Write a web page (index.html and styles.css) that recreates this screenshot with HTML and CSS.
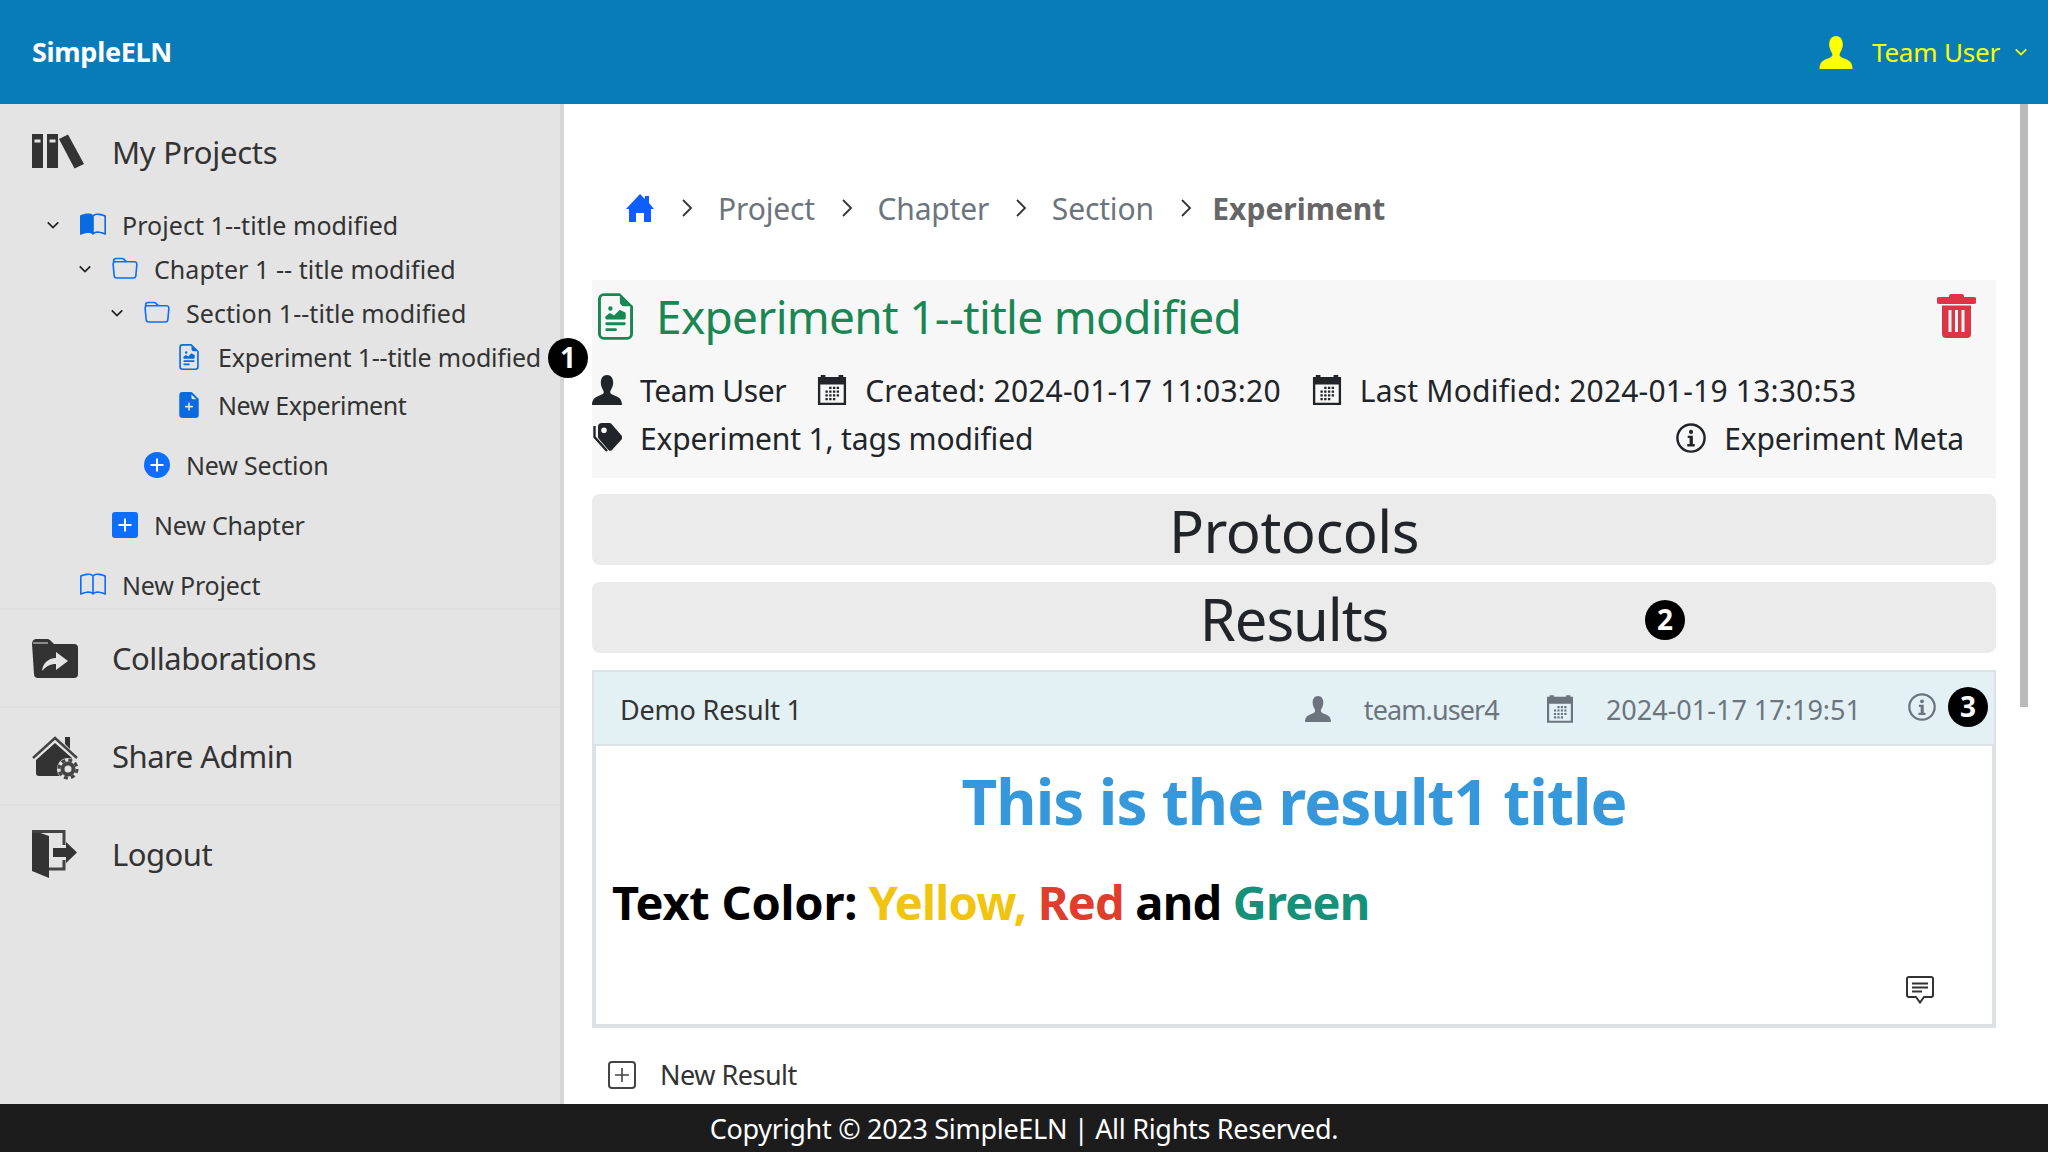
FILE: index.html

```html
<!DOCTYPE html>
<html lang="en">
<head>
  <meta charset="UTF-8" />
  <title>SimpleELN</title>
  <link rel="stylesheet" href="styles.css">
</head>
<body>
  <svg class="sprite" xmlns="http://www.w3.org/2000/svg">
    <symbol id="i-person" viewBox="0 0 16 16"><path d="M8 0c2.200 0 3.300 1.800 3.300 4.100S9.900 7.800 9.700 9.200c0 .8 1.100 1.200 2.900 2 1.500.6 3.400 1.500 3.400 4.800H0c0-3.300 1.900-4.200 3.400-4.800 1.800-.8 2.900-1.200 2.900-2C6.100 7.800 4.700 6.400 4.700 4.100S5.800 0 8 0z"/></symbol>
    <symbol id="i-calendar" viewBox="0 0 30 32"><path d="M0 2h3V0h5v2h14V0h5v2h3v30H0zM2.500 10v19.500h25V10z"/><path d="M12 12.500h2.500V15H12zM16 12.500h2.500V15H16zM20 12.500h2.500V15H20zM8 16.500h2.500V19H8zM12 16.500h2.500V19H12zM16 16.500h2.500V19H16zM20 16.500h2.500V19H20zM8 20.500h2.500V23H8zM12 20.500h2.500V23H12zM16 20.500h2.500V23H16zM20 20.500h2.500V23H20zM8 24.500h2.500V27H8zM12 24.500h2.500V27H12zM16 24.500h2.500V27H16z"/></symbol>
    <symbol id="i-info" viewBox="0 0 32 32"><circle cx="16" cy="16" r="14.500" fill="none" stroke="currentColor" stroke-width="2.600"/><circle cx="16" cy="9.500" r="2.200"/><path d="M12.500 13.500H18v9h2v2.500h-8v-2.500h2.500v-6.500h-2z"/></symbol>
    <symbol id="i-chevron" viewBox="0 0 16 16"><path d="M2 5l6 6 6-6" fill="none" stroke="currentColor" stroke-width="2"/></symbol>
    <symbol id="i-chevron-right" viewBox="0 0 12 20"><path d="M2 2l8 8-8 8" fill="none" stroke="currentColor" stroke-width="1.800"/></symbol>
    <symbol id="i-book" viewBox="0 0 16 16"><path d="M1 2.828c.885-.37 2.154-.769 3.388-.893 1.330-.134 2.458.063 3.112.752v9.746c-.935-.53-2.120-.603-3.213-.493-1.180.12-2.370.461-3.287.811V2.828zm7.500-.141c.654-.689 1.782-.886 3.112-.752 1.234.124 2.503.523 3.388.893v9.923c-.918-.35-2.107-.692-3.287-.81-1.094-.111-2.278-.039-3.213.492V2.687zM8 1.783C7.015.936 5.587.81 4.287.94c-1.514.153-3.042.672-3.994 1.105A.5.5 0 0 0 0 2.500v11a.5.5 0 0 0 .707.455c.882-.4 2.303-.881 3.680-1.020 1.409-.142 2.590.087 3.223.877a.5.5 0 0 0 .78 0c.633-.79 1.814-1.019 3.222-.877 1.378.139 2.800.62 3.681 1.020A.5.5 0 0 0 16 13.500v-11a.5.5 0 0 0-.293-.455c-.952-.433-2.480-.952-3.994-1.105C10.413.809 8.985.936 8 1.783z"/></symbol>
    <symbol id="i-book-half" viewBox="0 0 16 16"><path d="M8.500 2.687c.654-.689 1.782-.886 3.112-.752 1.234.124 2.503.523 3.388.893v9.923c-.918-.35-2.107-.692-3.287-.81-1.094-.111-2.278-.039-3.213.492V2.687zM8 1.783C7.015.936 5.587.81 4.287.94c-1.514.153-3.042.672-3.994 1.105A.5.5 0 0 0 0 2.500v11a.5.5 0 0 0 .707.455c.882-.4 2.303-.881 3.680-1.020 1.409-.142 2.590.087 3.223.877a.5.5 0 0 0 .78 0c.633-.79 1.814-1.019 3.222-.877 1.378.139 2.800.62 3.681 1.020A.5.5 0 0 0 16 13.500v-11a.5.5 0 0 0-.293-.455c-.952-.433-2.480-.952-3.994-1.105C10.413.809 8.985.936 8 1.783z"/></symbol>
    <symbol id="i-folder" viewBox="0 0 16 16"><path d="M.54 3.870.5 3a2 2 0 0 1 2-2h3.672a2 2 0 0 1 1.414.586l.828.828A2 2 0 0 0 9.828 3h3.982a2 2 0 0 1 1.992 2.181l-.637 7A2 2 0 0 1 13.174 14H2.826a2 2 0 0 1-1.991-1.819l-.637-7a1.990 1.990 0 0 1 .342-1.310zM2.190 4a1 1 0 0 0-.996 1.090l.637 7a1 1 0 0 0 .995.910h10.348a1 1 0 0 0 .995-.91l.637-7A1 1 0 0 0 13.810 4H2.190zm4.690-1.707A1 1 0 0 0 6.172 2H2.500a1 1 0 0 0-1 .981l.006.139C1.720 3.042 1.950 3 2.190 3h5.396l-.707-.707z"/></symbol>
    <symbol id="i-file-rich" viewBox="2 0 12 16"><path d="M14 4.500V14a2 2 0 0 1-2 2H4a2 2 0 0 1-2-2V2a2 2 0 0 1 2-2h5.500L14 4.500zm-3 0A1.500 1.500 0 0 1 9.500 3V1H4a1 1 0 0 0-1 1v12a1 1 0 0 0 1 1h8a1 1 0 0 0 1-1V4.500h-2z"/><path d="M4.500 12.500A.5.5 0 0 1 5 12h3a.5.5 0 0 1 0 1H5a.5.5 0 0 1-.5-.5zm0-2A.5.5 0 0 1 5 10h6a.5.5 0 0 1 0 1H5a.5.5 0 0 1-.5-.5zm1.639-3.708 1.330.886 1.854-1.855a.25.25 0 0 1 .289-.047l1.888.974V8.500a.5.5 0 0 1-.5.5H5a.5.5 0 0 1-.5-.5V8s1.540-1.274 1.639-1.208zM6.250 6a.75.75 0 1 0 0-1.500.75.75 0 0 0 0 1.500z"/></symbol>
    <symbol id="i-file-plus" viewBox="2 0 12 16"><path d="M9.293 0H4a2 2 0 0 0-2 2v12a2 2 0 0 0 2 2h8a2 2 0 0 0 2-2V4.707A1 1 0 0 0 13.707 4L10 .293A1 1 0 0 0 9.293 0zM9.500 3.500v-2l3 3h-2a1 1 0 0 1-1-1zM8.500 7v1.500H10a.5.5 0 0 1 0 1H8.500V11a.5.5 0 0 1-1 0V9.500H6a.5.5 0 0 1 0-1h1.500V7a.5.5 0 0 1 1 0z"/></symbol>
  </svg>

  <header class="topbar">
    <span class="brand">SimpleELN</span>
    <div class="user-menu">
      <svg class="user-icon"><use href="#i-person"/></svg>
      <span>Team User</span>
      <svg class="user-chevron"><use href="#i-chevron"/></svg>
    </div>
  </header>

  <div class="layout">
    <aside class="sidebar">
      <div class="nav-item nav-first">
        <svg class="icon-books" viewBox="0 0 52 36">
          <path d="M0 1h11v34H0zM2.500 6.500v3h6v-3zM15 1h11v34H15zM17.500 6.500v3h6v-3z" fill-rule="evenodd"/>
          <path d="M27 6l9-4.500L52 31l-9.500 4.500z"/>
        </svg>
        <span>My Projects</span>
      </div>

      <ul class="tree">
        <li>
          <div class="tree-row titled">
            <svg class="tree-chevron"><use href="#i-chevron"/></svg>
            <svg class="tree-icon blue-dark"><use href="#i-book-half"/></svg>
            <span>Project 1--title modified</span>
          </div>
          <ul>
            <li>
              <div class="tree-row titled">
                <svg class="tree-chevron"><use href="#i-chevron"/></svg>
                <svg class="tree-icon blue"><use href="#i-folder"/></svg>
                <span>Chapter 1 -- title modified</span>
              </div>
              <ul>
                <li>
                  <div class="tree-row titled">
                    <svg class="tree-chevron"><use href="#i-chevron"/></svg>
                    <svg class="tree-icon blue"><use href="#i-folder"/></svg>
                    <span>Section 1--title modified</span>
                  </div>
                  <ul>
                    <li class="tree-row leaf marked">
                      <svg class="tree-icon blue-dark"><use href="#i-file-rich"/></svg>
                      <span>Experiment 1--title modified</span>
                      <span class="badge badge-tree">1</span>
                    </li>
                    <li class="tree-row leaf new-experiment">
                      <svg class="tree-icon blue-dark"><use href="#i-file-plus"/></svg>
                      <span>New Experiment</span>
                    </li>
                  </ul>
                </li>
                <li class="tree-row leaf add-row">
                  <svg class="tree-icon blue" viewBox="0 0 26 26"><circle cx="13" cy="13" r="13"/><path d="M12 6.500h2V12h5.500v2H14v5.500h-2V14H6.500v-2H12z" fill="#fff"/></svg>
                  <span>New Section</span>
                </li>
              </ul>
            </li>
            <li class="tree-row leaf add-row">
              <svg class="tree-icon blue" viewBox="0 0 26 26"><rect width="26" height="26" rx="3"/><path d="M12 6.500h2V12h5.500v2H14v5.500h-2V14H6.500v-2H12z" fill="#fff"/></svg>
              <span>New Chapter</span>
            </li>
          </ul>
        </li>
        <li class="tree-row leaf add-row">
          <svg class="tree-icon blue"><use href="#i-book"/></svg>
          <span>New Project</span>
        </li>
      </ul>

      <div class="nav-item with-line">
        <svg class="icon-collab" viewBox="0 0 46 39">
          <path d="M4 0h11c1.500 0 2.500.6 3.500 1.500L22 5h20a4 4 0 0 1 4 4v26a4 4 0 0 1-4 4H6a4 4 0 0 1-4-4L0 5a5 5 0 0 1 4-5z"/>
          <path d="M10 32c.8-8 6-12.500 14-13v-6l12 9-12 9v-6c-6 0-10 2.500-14 7z" fill="#e4e4e4"/>
          <path d="M1 4h15" stroke="#e4e4e4" stroke-width="1" fill="none"/>
        </svg>
        <span>Collaborations</span>
      </div>
      <div class="nav-item with-line">
        <svg class="icon-share" viewBox="0 0 47 44">
          <path d="M1 22L23 2l22 20" fill="none" stroke="#444" stroke-width="2.500"/>
          <path d="M33 1h5v12l-5-5z"/>
          <path d="M23 7l17 15v18H7a3 3 0 0 1-3-3V24z"/>
          <circle cx="36" cy="33" r="11" fill="#e4e4e4"/>
          <circle cx="36" cy="33" r="5.500" fill="none" stroke="#444" stroke-width="4"/>
          <circle cx="36" cy="33" r="9" fill="none" stroke="#444" stroke-width="3" stroke-dasharray="4 3.070"/>
        </svg>
        <span>Share Admin</span>
      </div>
      <div class="nav-item with-line">
        <svg class="icon-door" viewBox="0 0 45 48">
          <path d="M0 0l17 6v42L0 41z"/>
          <path d="M0 1.500h32V15M17 39h15V30" fill="none" stroke="#444" stroke-width="3"/>
          <path d="M21 18h13v-6l11 10.500L34 33v-6H21z"/>
        </svg>
        <span>Logout</span>
      </div>
    </aside>

    <main class="content">
      <nav class="crumbs">
        <svg class="crumb-home" viewBox="0 0 28 28"><path d="M14 0l5 5V2h4v7l5 6h-3v13h-7v-9H10v9H3V15H0z"/></svg>
        <svg class="crumb-sep first"><use href="#i-chevron-right"/></svg>
        <span>Project</span>
        <svg class="crumb-sep"><use href="#i-chevron-right"/></svg>
        <span>Chapter</span>
        <svg class="crumb-sep"><use href="#i-chevron-right"/></svg>
        <span>Section</span>
        <svg class="crumb-sep"><use href="#i-chevron-right"/></svg>
        <strong>Experiment</strong>
      </nav>

      <section class="exp-head">
        <div class="exp-title">
          <svg class="exp-icon"><use href="#i-file-rich"/></svg>
          <h2>Experiment 1--title modified</h2>
          <svg class="trash" viewBox="0 0 39 44">
            <path d="M14 0h11a2 2 0 0 1 2 2v1h9.500a2.500 2.500 0 0 1 0 7h-34a2.500 2.500 0 0 1 0-7H12V2a2 2 0 0 1 2-2z"/>
            <path d="M5 11.500h29V40a4 4 0 0 1-4 4H9a4 4 0 0 1-4-4zM11.500 16v22h3V16zM18 16v22h3V16zM24.500 16v22h3V16z" fill-rule="evenodd"/>
          </svg>
        </div>
        <div class="meta-row">
          <span class="meta-item meta-owner"><svg class="meta-icon"><use href="#i-person"/></svg>Team User</span>
          <span class="meta-item meta-date"><svg class="meta-icon"><use href="#i-calendar"/></svg>Created: 2024-01-17 11:03:20</span>
          <span class="meta-item meta-date"><svg class="meta-icon"><use href="#i-calendar"/></svg>Last Modified: 2024-01-19 13:30:53</span>
        </div>
        <div class="meta-row spread">
          <span class="meta-item">
            <svg class="meta-icon" viewBox="0 0 30 30"><path d="M2.500 3v11l12.500 14" fill="none" stroke="currentColor" stroke-width="2.400"/><path d="M10 0h7.500a3 3 0 0 1 2 1l10 11.500a3 3 0 0 1 0 4L20 27a2.500 2.500 0 0 1-3.500 0L7 16a3 3 0 0 1-1-2.300V4a4 4 0 0 1 4-4zm2 4.500a2.800 2.800 0 1 0 0 5.600 2.800 2.800 0 0 0 0-5.600z" fill-rule="evenodd"/></svg>
            Experiment 1, tags modified
          </span>
          <span class="meta-item"><svg class="meta-icon"><use href="#i-info"/></svg>Experiment Meta</span>
        </div>
      </section>

      <div class="bar">Protocols</div>
      <div class="bar bar-results">Results<span class="badge badge-results">2</span></div>

      <section class="result-card">
        <div class="result-head">
          <span class="result-name">Demo Result 1</span>
          <div class="result-meta">
            <svg class="result-icon"><use href="#i-person"/></svg>
            <span class="result-user">team.user4</span>
            <svg class="result-icon cal"><use href="#i-calendar"/></svg>
            <span class="result-date">2024-01-17 17:19:51</span>
            <svg class="result-info"><use href="#i-info"/></svg>
          </div>
          <span class="badge badge-card">3</span>
        </div>
        <div class="result-body">
          <h1>This is the result1 title</h1>
          <p><span class="text-label">Text Color:</span> <span class="c-yellow">Yellow,</span> <span class="c-red">Red</span> and <span class="c-green">Green</span></p>
          <div class="result-foot">
            <svg class="comment" viewBox="0 0 28 28"><path d="M3 1h22a2 2 0 0 1 2 2v16a2 2 0 0 1-2 2h-7l-4 5.500L10 21H3a2 2 0 0 1-2-2V3a2 2 0 0 1 2-2z" fill="none" stroke="currentColor" stroke-width="2"/><path d="M6 6.500h16v2H6zM6 10.500h16v2H6zM6 14.500h10v2H6z"/></svg>
          </div>
        </div>
      </section>

      <div class="new-result">
        <svg class="new-icon" viewBox="0 0 28 28"><rect x="1" y="1" width="26" height="26" rx="3" fill="none" stroke="currentColor" stroke-width="2"/><path d="M13.200 7h1.600v6.200H21v1.600h-6.200V21h-1.600v-6.200H7v-1.600h6.200z"/></svg>
        <span>New Result</span>
      </div>
    </main>
  </div>

  <footer class="footer">Copyright © 2023 SimpleELN | All Rights Reserved.</footer>

  <div class="scroll-thumb"></div>
</body>
</html>
```

FILE: styles.css

```css
* {
  box-sizing: border-box;
}
html, body {
  height: 100%;
}
body {
  margin: 0;
  display: flex;
  flex-direction: column;
  overflow: hidden;
  font-family: "Noto Sans", "Open Sans", sans-serif;
  color: #212529;
  background: #fff;
}
svg {
  fill: currentColor;
  flex: none;
}
.sprite {
  display: none;
}
h1, h2, p, ul {
  margin: 0;
  padding: 0;
  font: inherit;
}
ul {
  list-style: none;
}

.topbar {
  height: 104px;
  flex: none;
  display: flex;
  align-items: center;
  justify-content: space-between;
  padding: 0 20px 0 32px;
  background: #087cb9;
}
.brand {
  margin-bottom: 2px;
  color: #fff;
  font-size: 27px;
  font-weight: 700;
  letter-spacing: -0.3px;
}
.user-menu {
  display: flex;
  align-items: center;
  color: #ff0;
  font-size: 26px;
  letter-spacing: -0.2px;
}
.user-icon {
  width: 36px;
  height: 33px;
  margin-right: 18px;
}
.user-chevron {
  width: 14px;
  height: 14px;
  margin-left: 14px;
}

.layout {
  flex: 1;
  display: flex;
  min-height: 0;
}
.sidebar {
  width: 564px;
  flex: none;
  position: relative;
  z-index: 2;
  background: #e4e4e4;
  border-right: 4px solid #d6d6d6;
  color: #333;
}
.nav-item {
  height: 98px;
  display: grid;
  grid-template-columns: 80px 1fr;
  align-items: center;
  padding-left: 32px;
  font-size: 31px;
  letter-spacing: -0.5px;
  fill: #444;
}
.nav-first {
  padding-bottom: 2px;
  letter-spacing: -0.25px;
}
.with-line {
  border-top: 2px solid #dfdfdf;
}
.icon-books {
  width: 52px;
  height: 36px;
  margin-bottom: 3px;
}
.icon-collab {
  width: 46px;
  height: 39px;
}
.icon-share {
  width: 47px;
  height: 44px;
  margin-top: 4px;
}
.icon-door {
  width: 45px;
  height: 48px;
}

.tree {
  padding: 1px 0 1px 40px;
  font-size: 25px;
  letter-spacing: -0.2px;
}
.tree ul {
  padding-left: 32px;
}
.tree-row {
  height: 44px;
  display: flex;
  align-items: center;
  color: #333;
}
.titled {
  letter-spacing: 0.05px;
}
.leaf {
  padding-left: 40px;
}
.tree-chevron {
  width: 14px;
  height: 14px;
  margin: 0 20px 0 6px;
  color: #222;
}
.tree-icon {
  width: 26px;
  height: 26px;
  margin-right: 16px;
}
.blue {
  color: #0d6efd;
}
.blue-dark {
  color: #0a6adf;
}
.marked {
  position: relative;
}
.new-experiment {
  margin-top: 4px;
  letter-spacing: -0.4px;
}
.add-row {
  margin-top: 16px;
}

.badge {
  position: absolute;
  width: 40px;
  height: 40px;
  border-radius: 50%;
  background: #000;
  color: #fff;
  font-family: "Noto Sans", sans-serif;
  font-size: 28px;
  font-weight: 700;
  line-height: 39px;
  text-align: center;
  letter-spacing: 0;
}
.badge-tree {
  right: -28px;
  top: 3px;
}
.badge-results {
  left: 1053px;
  top: 18px;
}
.badge-card {
  right: 6px;
  top: 15px;
}

.content {
  flex: 1;
  padding: 80px 52px 0 28px;
  min-width: 0;
  overflow: hidden;
}
.crumbs {
  height: 48px;
  margin-bottom: 48px;
  display: flex;
  align-items: center;
  padding-left: 34px;
  color: #6c757d;
  font-size: 30px;
  letter-spacing: -0.15px;
}
.crumb-home {
  width: 28px;
  height: 28px;
  color: #0d5efd;
}
.crumb-sep {
  width: 12px;
  height: 20px;
  margin: 0 24.5px 0 26px;
  color: #333;
}
.crumb-sep.first {
  margin: 0 25px 0 27px;
}
.crumbs strong {
  margin-left: -4px;
  font-weight: 700;
  letter-spacing: 0;
  color: #666;
}

.exp-head {
  height: 198px;
  background: #f7f7f7;
  font-size: 30px;
  letter-spacing: -0.15px;
}
.exp-title {
  height: 72px;
  margin-bottom: 14px;
  display: flex;
  align-items: center;
  padding: 0 20px 0 6px;
  color: #198754;
}
.exp-icon {
  width: 35px;
  height: 47px;
}
.exp-title h2 {
  flex: 1;
  margin-left: 23px;
  font-size: 46px;
  letter-spacing: -0.7px;
}
.trash {
  width: 39px;
  height: 44px;
  color: #dc3545;
}
.meta-row {
  height: 48px;
  display: flex;
  align-items: center;
  gap: 31px;
}
.spread {
  justify-content: space-between;
  padding-right: 32px;
}
.meta-item {
  display: flex;
  align-items: center;
}
.meta-owner {
  letter-spacing: -0.4px;
}
.meta-date {
  letter-spacing: 0.2px;
}
.meta-icon {
  width: 30px;
  height: 30px;
  margin-right: 18px;
}

.bar {
  position: relative;
  height: 71px;
  margin-top: 17px;
  background: #ebebeb;
  border-radius: 8px;
  font-size: 58px;
  line-height: 74px;
  text-align: center;
  letter-spacing: -0.5px;
}
.bar-results {
  letter-spacing: -1.1px;
}
.exp-head + .bar {
  margin-top: 16px;
}

.result-card {
  margin-top: 17px;
}
.result-head {
  position: relative;
  height: 76px;
  display: flex;
  align-items: center;
  padding: 2px 58px 0 26px;
  border: 2px solid #dee2e6;
  background: #e3f1f5;
  font-size: 27px;
  letter-spacing: -0.2px;
}
.result-name {
  color: #333;
}
.result-meta {
  margin-left: auto;
  display: flex;
  align-items: center;
  color: #6c757d;
}
.result-user {
  letter-spacing: -0.9px;
}
.result-date {
  letter-spacing: 0;
}
.result-icon {
  width: 26px;
  height: 28px;
  margin-right: 33px;
}
.result-icon.cal {
  margin-left: 48px;
}
.result-info {
  width: 28px;
  height: 28px;
  margin: -4px 0 0 47px;
}
.result-body {
  height: 282px;
  padding-top: 19px;
  border: 4px solid #dee2e6;
  border-top: 0;
}
.result-body h1 {
  height: 72px;
  color: #3498db;
  font-size: 62px;
  font-weight: 700;
  line-height: 72px;
  text-align: center;
  letter-spacing: -0.9px;
}
.result-body p {
  height: 72px;
  margin-top: 29px;
  padding-left: 16px;
  color: #000;
  font-size: 47px;
  font-weight: 700;
  line-height: 72px;
  letter-spacing: -0.8px;
}
.text-label {
  letter-spacing: -0.25px;
}
.c-yellow {
  color: #f1c40f;
}
.c-red {
  color: #e03e2d;
}
.c-green {
  color: #169179;
}
.result-foot {
  display: flex;
  justify-content: flex-end;
  padding-right: 58px;
  margin-top: 38px;
}
.comment {
  width: 28px;
  height: 28px;
  color: #333;
}

.new-result {
  margin-top: 28px;
  padding-left: 16px;
  display: flex;
  align-items: center;
  font-size: 27px;
  letter-spacing: -0.5px;
  color: #333;
}
.new-icon {
  width: 28px;
  height: 28px;
  margin-right: 24px;
  color: #444;
}

.footer {
  height: 48px;
  flex: none;
  background: #1c1c1c;
  color: #fff;
  font-size: 27px;
  line-height: 50px;
  text-align: center;
  letter-spacing: -0.3px;
}

.scroll-thumb {
  position: absolute;
  left: 2020px;
  top: 104px;
  width: 8px;
  height: 603px;
  background: #bbb;
}
```
